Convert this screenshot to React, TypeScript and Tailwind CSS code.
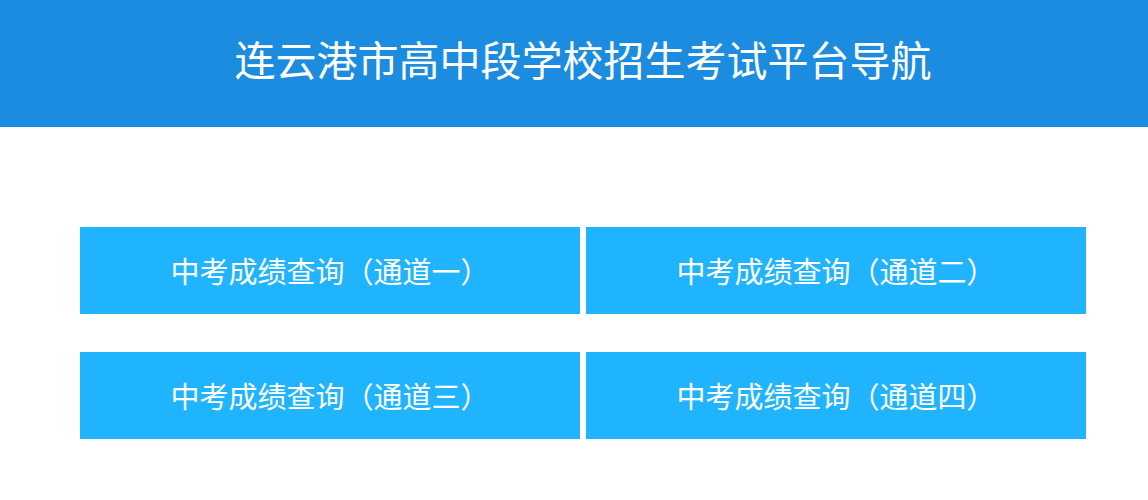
import React from "react";

const channels = ["一", "二", "三", "四"];

const ChannelButton = ({ label }: { label: string }) => {
  return (
    <a
      href="#"
      className="flex h-[87px] w-[500px] items-center justify-center bg-[#20b4ff] text-[29px] text-white"
    >
      中考成绩查询（通道{label}）
    </a>
  );
};

const App = () => {
  return (
    <div
      className="min-h-[500px] w-full bg-white"
      style={{ fontFamily: '"Microsoft YaHei", "Noto Sans CJK SC", sans-serif' }}
    >
      <header className="flex h-[127px] items-center justify-center bg-[#1b8ce0] pb-[10px] pl-[18px]">
        <h1 className="text-[41px] font-normal text-white">
          连云港市高中段学校招生考试平台导航
        </h1>
      </header>
      <div className="ml-[80px] mt-[100px] grid w-[1006px] grid-cols-[500px_500px] gap-x-[6px] gap-y-[38px]">
        {channels.map((c) => (
          <ChannelButton key={c} label={c} />
        ))}
      </div>
    </div>
  );
};

export default App;
